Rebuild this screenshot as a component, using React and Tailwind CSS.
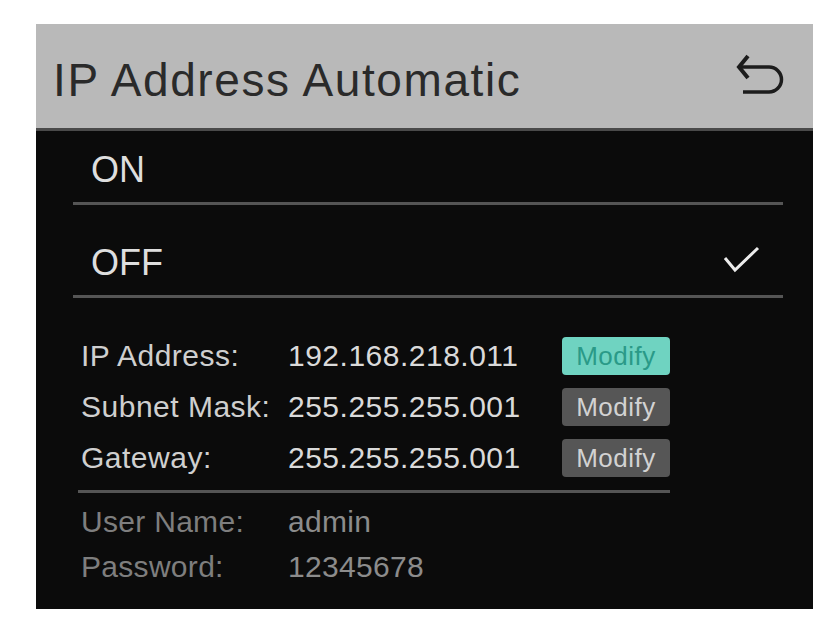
import React from "react";

const font = { fontFamily: '"Liberation Sans", Arial, sans-serif' };

const BackIcon = () => (
  <svg width="48" height="44" viewBox="0 0 48 44" fill="none" className="-mt-[4px]">
    <polyline points="12,4 3,15 12,26" stroke="#1c1c1c" strokeWidth="4" strokeLinejoin="miter" />
    <path d="M4 15 H33 A12.5 12.5 0 0 1 33 40 H7" stroke="#1c1c1c" strokeWidth="3.5" />
  </svg>
);

const Check = () => (
  <svg width="38" height="28" viewBox="0 0 38 28" fill="none" className="mb-[7px]">
    <polyline points="2,12 12,24 35,2" stroke="#ececec" strokeWidth="3" />
  </svg>
);

const ModifyButton = ({ active }) => (
  <div
    className={`w-[108px] h-[38px] rounded-[4px] flex items-center justify-center text-[26px] tracking-[0.5px] leading-none ${
      active ? "bg-[#6fd3c1] text-[#2a9a88]" : "bg-[#565656] text-[#d2d2d2]"
    }`}
  >
    Modify
  </div>
);

const networkRows = [
  { label: "IP Address:", value: "192.168.218.011", active: true },
  { label: "Subnet Mask:", value: "255.255.255.001", active: false },
  { label: "Gateway:", value: "255.255.255.001", active: false },
];

export default function App() {
  return (
    <div className="min-h-[631px] bg-white pt-[24px] pl-[36px]" style={font}>
      <div className="w-[777px] bg-[#0b0b0b]">
        {/* title bar */}
        <div className="h-[107px] bg-[#b9b9b9] border-b-[3px] border-[#4a4a4a] flex items-center justify-between pl-[17px] pr-[29px]">
          <span className="mt-[8px] text-[46px] leading-[46px] tracking-[1.6px] text-[#2a2a2a]">
            IP Address Automatic
          </span>
          <BackIcon />
        </div>

        {/* on / off choice */}
        <div className="ml-[37px] mr-[30px]">
          <div className="h-[74px] border-b-[3px] border-[#555555] flex items-end pb-[14px] pl-[18px]">
            <span className="text-[36px] leading-none text-[#dedede]">ON</span>
          </div>
          <div className="h-[93px] border-b-[3px] border-[#555555] flex items-end justify-between pb-[14px] pl-[18px] pr-[22px]">
            <span className="text-[36px] leading-none text-[#dedede]">OFF</span>
            <Check />
          </div>
        </div>

        {/* network settings */}
        <div className="ml-[42px] w-[592px] pt-[39px] pb-[27px]">
          <div className="flex flex-col gap-[13px] pl-[3px]">
            {networkRows.map((row) => (
              <div key={row.label} className="flex items-center text-[30px] leading-[30px] tracking-[0.5px]">
                <span className="w-[207px] text-[#cfcfcf]">{row.label}</span>
                <span className="w-[274px] text-[#dadada]">{row.value}</span>
                <ModifyButton active={row.active} />
              </div>
            ))}
          </div>

          <div className="mt-[13px] h-[3px] bg-[#555555]" />

          <div className="mt-[14px] flex flex-col gap-[15px] pl-[3px] text-[30px] leading-[30px] tracking-[0.3px]">
            <div className="flex">
              <span className="w-[207px] text-[#7e7e7e]">User Name:</span>
              <span className="text-[#8c8c8c]">admin</span>
            </div>
            <div className="flex">
              <span className="w-[207px] text-[#7e7e7e]">Password:</span>
              <span className="text-[#8c8c8c]">12345678</span>
            </div>
          </div>
        </div>
      </div>
    </div>
  );
}
